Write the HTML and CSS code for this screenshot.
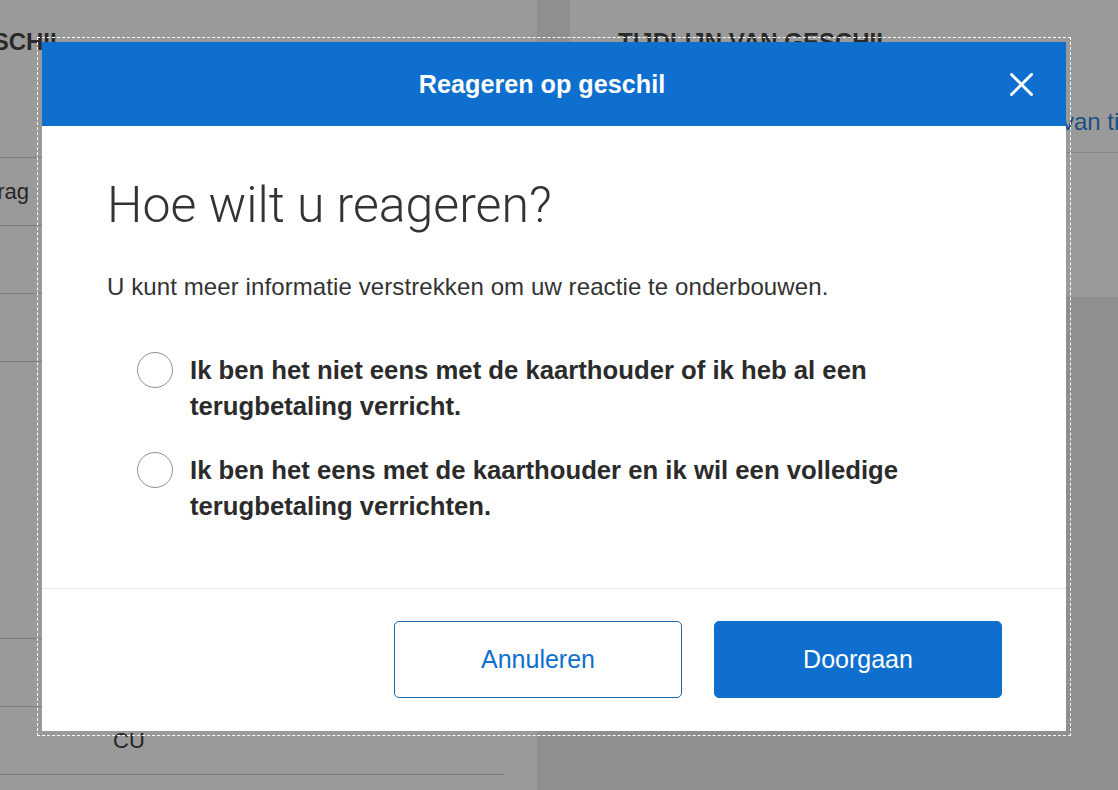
FILE: index.html
```html
<!DOCTYPE html>
<html lang="nl">
<head>
<meta charset="utf-8">
<title>Reageren op geschil</title>
<link rel="stylesheet" href="styles.css">
</head>
<body>
<div class="page">
  <section class="card-left">
    <h2 class="card-title">GESCHIL</h2>
    <div class="rows">
      <div class="row"><span class="cell">Bedrag</span><span class="cell"></span></div>
      <div class="row"><span class="cell"></span><span class="cell"></span></div>
      <div class="row"><span class="cell"></span><span class="cell"></span></div>
      <div class="row row-tall"><span class="cell"></span><span class="cell"></span></div>
      <div class="row"><span class="cell"></span><span class="cell"></span></div>
      <div class="row"><span class="cell"></span><span class="cell">CU</span></div>
    </div>
  </section>
  <section class="card-right">
    <h2 class="card-title">TIJDLIJN VAN GESCHIL</h2>
    <p class="timeline-link">van tijdlijn weergeven</p>
  </section>
</div>

<div class="modal" role="dialog" aria-labelledby="modal-title">
  <header class="modal-header">
    <h1 class="modal-title" id="modal-title">Reageren op geschil</h1>
    <button class="close" aria-label="Sluiten">
      <svg width="23" height="23" viewBox="0 0 23 23"><path d="M1.5 1.5 L21.5 21.5 M21.5 1.5 L1.5 21.5" stroke="#fff" stroke-width="3" stroke-linecap="round" fill="none"/></svg>
    </button>
  </header>
  <div class="modal-body">
    <h2 class="question">Hoe wilt u reageren?</h2>
    <p class="intro">U kunt meer informatie verstrekken om uw reactie te onderbouwen.</p>
    <div class="options">
      <label class="option"><span class="radio"></span><span class="option-text">Ik ben het niet eens met de kaarthouder of ik heb al een terugbetaling verricht.</span></label>
      <label class="option"><span class="radio"></span><span class="option-text">Ik ben het eens met de kaarthouder en ik wil een volledige terugbetaling verrichten.</span></label>
    </div>
  </div>
  <footer class="modal-footer">
    <button class="btn btn-secondary">Annuleren</button>
    <button class="btn btn-primary">Doorgaan</button>
  </footer>
</div>
</body>
</html>
```
FILE: styles.css
```css
* { box-sizing: border-box; }
html, body { margin: 0; padding: 0; }
body {
  width: 1118px;
  height: 790px;
  overflow: hidden;
  background: #8f8f8f;
  font-family: "Liberation Sans", Arial, sans-serif;
  color: #222;
  position: relative;
}
.page {
  display: flex;
  gap: 33px;
  height: 790px;
}
.card-left {
  flex: none;
  width: 579px;
  margin-left: -42px;
  background: #9a9a9a;
  padding-right: 32px;
}
.card-title {
  margin: 0;
  padding-top: 28px;
  font-size: 24px;
  font-weight: bold;
  line-height: 28px;
  color: #2a2a2a;
  height: 157px;
}
.rows { border-top: 1px solid #7e7e7e; }
.row {
  display: grid;
  grid-template-columns: 155px 1fr;
  height: 68px;
  align-items: center;
  border-bottom: 1px solid #7e7e7e;
  font-size: 22px;
  color: #262626;
}
.row-tall { height: 277px; }
.card-right {
  flex: none;
  width: 600px;
  height: 297px;
  background: #9a9a9a;
  padding-left: 48px;
}
.card-right .card-title { height: auto; }
.timeline-link {
  margin: 0;
  padding: 52px 0 0 444px;
  height: 97px;
  font-size: 24px;
  line-height: 28px;
  color: #1d4f82;
  border-bottom: 1px solid #858585;
  white-space: nowrap;
}

/* Modal */
.modal {
  position: absolute;
  left: 42px;
  top: 42px;
  width: 1024px;
  background: #fff;
  outline: 1px dashed #fff;
  outline-offset: 4px;
  display: flex;
  flex-direction: column;
}
.modal-header {
  height: 84px;
  background: #0f6fce;
  display: flex;
  align-items: center;
}
.modal-title {
  flex: 1;
  margin: 0;
  padding-left: 32px;
  text-align: center;
  color: #fff;
  font-size: 25.2px;
  font-weight: bold;
  line-height: 30px;
}
.close {
  flex: none;
  width: 23px;
  height: 23px;
  margin-right: 33px;
  padding: 0;
  border: 0;
  background: none;
  display: flex;
}
.modal-body {
  padding: 51px 65px 64px;
  border-bottom: 1px solid #e6e6e6;
}
.question {
  margin: 0;
  font-family: Roboto, "Liberation Sans", Arial, sans-serif;
  font-size: 50px;
  font-weight: 300;
  line-height: 56px;
  color: #333;
}
.intro {
  margin: 38px 0 0;
  font-size: 24px;
  letter-spacing: 0.1px;
  line-height: 32px;
  color: #333;
}
.options {
  margin-top: 49px;
  padding-left: 30px;
  display: flex;
  flex-direction: column;
  gap: 28px;
}
.option {
  display: flex;
  gap: 17px;
  align-items: flex-start;
}
.radio {
  flex: none;
  width: 36px;
  height: 36px;
  border: 1px solid #8e8e8e;
  border-radius: 50%;
  background: #fff;
}
.option-text {
  font-size: 25.7px;
  font-weight: bold;
  line-height: 36px;
  color: #2b2b2b;
}
.modal-footer {
  display: flex;
  justify-content: flex-end;
  gap: 32px;
  padding: 32px 64px 33px;
}
.btn {
  width: 288px;
  height: 77px;
  border-radius: 5px;
  font-family: "Liberation Sans", Arial, sans-serif;
  font-size: 25px;
  padding: 0;
}
.btn-secondary {
  background: #fff;
  border: 1px solid #1d67b0;
  color: #0f6fce;
}
.btn-primary {
  background: #0f6fce;
  border: 1px solid #0f6fce;
  color: #fff;
}
```
